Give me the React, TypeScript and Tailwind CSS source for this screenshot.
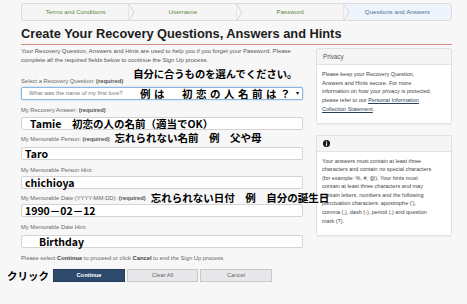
import React from "react";

const JP = "font-['Noto_Sans_CJK_JP','Noto_Sans',sans-serif] font-bold text-black";

function Chevron() {
  return (
    <svg className="absolute right-[-6px] top-[-1px] z-10" width="7" height="19" viewBox="0 0 7 19">
      <polygon points="0,0 6,9.5 0,19" fill="#f5f5f5" stroke="#d6d6d6" strokeWidth="1" />
      <rect x="-1" y="0" width="1" height="19" fill="#f5f5f5" />
    </svg>
  );
}

function Step({ label, active, last }: { label: string; active?: boolean; last?: boolean }) {
  return (
    <div
      className={
        "relative flex-1 flex items-center justify-center text-[6.2px] " +
        (active ? "bg-[#edf4fc] text-[#4f7190]" : "text-[#5f8a3a]")
      }
    >
      {label}
      {!last && <Chevron />}
    </div>
  );
}

function Label({ text, req }: { text: string; req?: boolean }) {
  return (
    <span className="text-[5.8px] leading-[8px] text-[#666] whitespace-nowrap">
      {text}
      {req && <b className="text-[#555]"> (required)</b>}
    </span>
  );
}

function Box({ children, className = "" }: { children?: React.ReactNode; className?: string }) {
  return (
    <div
      className={
        "h-[13px] bg-white border border-[#d4d4d4] rounded-[2px] flex items-center " + className
      }
    >
      {children}
    </div>
  );
}

export default function App() {
  return (
    <div className="w-[467px] h-[304px] overflow-hidden bg-[#f7f7f7] font-['Liberation_Sans',Arial,sans-serif] pl-[21px] pr-[15px] pt-[3px]">
      {/* breadcrumb */}
      <div className="flex h-[18px] bg-[#f5f5f5] border border-[#dcdcdc] rounded-[3px] overflow-hidden">
        <Step label="Terms and Conditions" />
        <Step label="Username" />
        <Step label="Password" />
        <Step label="Questions and Answers" active last />
      </div>

      {/* title */}
      <h1 className="mt-[6px] pb-[3px] border-b border-[#d68a88] text-[12.8px] leading-[14px] font-bold text-[#1c1c1c] whitespace-nowrap">
        Create Your Recovery Questions, Answers and Hints
      </h1>

      <div className="flex gap-[13px]">
        {/* left column */}
        <div className="w-[282px] flex flex-col">
          <p className="mt-[2px] text-[6px] leading-[9px] text-[#555] whitespace-nowrap">
            Your Recovery Question, Answers and Hints are used to help you if you forget your Password. Please
            <br />
            complete all the required fields below to continue the Sign Up process.
          </p>

          <div className="mt-[2.5px] flex items-end">
            <Label text="Select a Recovery Question:" req />
            <span className={JP + " ml-[10px] mb-[6px] text-[10.3px] leading-[11px] whitespace-nowrap"}>
              自分に合うものを選んでください。
            </span>
          </div>
          <div className="mt-[2.3px] h-[13px] bg-white border border-[#8db6df] rounded-[2px] shadow-[0_0_2px_rgba(102,175,233,0.6)] flex items-center pl-[7px] pr-[3px]">
            <span className="w-[111px] text-[5.8px] text-[#777] whitespace-nowrap">What was the name of my first love?</span>
            <span className={JP + " text-[10.5px] leading-[11px] whitespace-nowrap tracking-[3.5px]"}>例は　初恋の人名前は？</span>
            <span className="ml-auto text-[6px] text-black leading-none">▾</span>
          </div>

          <div className="mt-[6px] flex">
            <Label text="My Recovery Answer:" req />
          </div>
          <Box className="mt-[3px] pl-[8px]">
            <span className={JP + " text-[10.5px] leading-[11px] whitespace-nowrap"}>Tamie　初恋の人の名前（適当でOK）</span>
          </Box>

          <div className="mt-[2px] flex items-end">
            <Label text="My Memorable Person:" req />
            <span className={JP + " ml-[5px] text-[10.5px] leading-[11px] whitespace-nowrap"}>忘れられない名前　例　父や母</span>
          </div>
          <Box className="mt-[4px] pl-[3px]">
            <span className={JP + " text-[10.5px] leading-[11px]"}>Taro</span>
          </Box>

          <div className="mt-[6px] flex">
            <Label text="My Memorable Person Hint:" />
          </div>
          <Box className="mt-[2px] pl-[3px]">
            <span className={JP + " text-[10.5px] leading-[11px]"}>chichioya</span>
          </Box>

          <div className="mt-[3.5px] flex items-center">
            <Label text="My Memorable Date (YYYY-MM-DD):" req />
            <span className={JP + " relative z-20 ml-[5px] text-[10.5px] leading-[11px] whitespace-nowrap"}>
              忘れられない日付　例　自分の誕生日
            </span>
          </div>
          <Box className="mt-[0.5px] pl-[3px]">
            <span className={JP + " text-[10.5px] leading-[11px]"}>1990－02－12</span>
          </Box>

          <div className="mt-[6px] flex">
            <Label text="My Memorable Date Hint:" />
          </div>
          <Box className="mt-[4px] pl-[17px]">
            <span className={JP + " text-[10.5px] leading-[11px]"}>Birthday</span>
          </Box>

          <p className="mt-[6px] text-[5.8px] leading-[8px] text-[#666] whitespace-nowrap">
            Please select <b className="text-[#444]">Continue</b> to proceed or click <b className="text-[#444]">Cancel</b> to end the Sign Up process.
          </p>

          <div className="mt-[7px] -ml-[14px] flex items-center">
            <span className={JP + " w-[46px] text-[10.5px] leading-[13px] whitespace-nowrap"}>クリック</span>
            <button className="w-[72px] h-[13px] bg-[#2d4a6d] border border-[#213b59] text-white font-bold text-[5.8px]">
              Continue
            </button>
            <button className="ml-[2px] w-[71px] h-[13px] bg-[#e8e8ea] border border-[#c9c9cc] text-[#666] text-[5.8px]">
              Clear All
            </button>
            <button className="ml-[2px] w-[72px] h-[13px] bg-[#e8e8ea] border border-[#c9c9cc] text-[#666] text-[5.8px]">
              Cancel
            </button>
          </div>
        </div>

        {/* sidebar */}
        <div className="w-[136px] flex flex-col">
          <div className="mt-[3px] bg-white border border-[#e0e0e0] rounded-[2px] shadow-[0_1px_1px_rgba(0,0,0,0.04)]">
            <div className="h-[16px] bg-[#f5f5f5] border-b border-[#e3e3e3] flex items-center pl-[6px] text-[6.3px] text-[#555]">
              Privacy
            </div>
            <p className="px-[5px] pt-[5px] pb-[9px] text-[5.5px] leading-[8.7px] text-[#444] whitespace-nowrap">
              Please keep your Recovery Question,
              <br />
              Answers and Hints secure. For more
              <br />
              information on how your privacy is protected,
              <br />
              please refer to our <span className="underline text-[#2b3f5c]">Personal Information</span>
              <br />
              <span className="underline text-[#2b3f5c]">Collection Statement</span>.
            </p>
          </div>

          <div className="mt-[11px] bg-white border border-[#e0e0e0] rounded-[2px] shadow-[0_1px_1px_rgba(0,0,0,0.04)]">
            <div className="h-[16px] bg-[#f5f5f5] border-b border-[#e3e3e3] flex items-center pl-[6px]">
              <svg width="7" height="7" viewBox="0 0 10 10">
                <circle cx="5" cy="5" r="5" fill="#111" />
                <circle cx="5" cy="3" r="1.1" fill="#fff" />
                <rect x="4.1" y="4.6" width="1.8" height="3.6" fill="#fff" />
              </svg>
            </div>
            <p className="px-[5px] pt-[5px] pb-[10px] text-[5.5px] leading-[8.6px] text-[#444] whitespace-nowrap">
              Your answers must contain at least three
              <br />
              characters and contain no special characters
              <br />
              (for example: %, #, @). Your hints must
              <br />
              contain at least three characters and may
              <br />
              contain letters, numbers and the following
              <br />
              punctuation characters: apostrophe (&#39;),
              <br />
              comma (,), dash (-), period (.) and question
              <br />
              mark (?).
            </p>
          </div>
        </div>
      </div>
    </div>
  );
}
